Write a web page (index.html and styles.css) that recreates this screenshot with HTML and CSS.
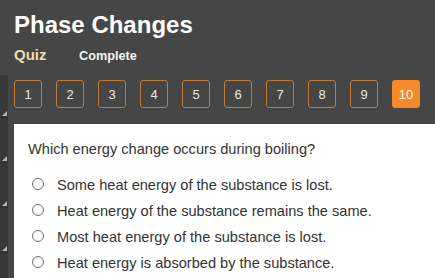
FILE: index.html
```html
<!DOCTYPE html>
<html>
<head>
<meta charset="utf-8">
<link rel="stylesheet" href="styles.css">
</head>
<body>
<header class="head">
  <h1 class="title">Phase Changes</h1>
  <div class="sub">
    <span class="kind">Quiz</span>
    <span class="status">Complete</span>
  </div>
</header>
<div class="main">
  <div class="rail">
    <div class="seg seg-first"><i class="grip"></i></div>
    <div class="seg"><i class="grip"></i></div>
    <div class="seg"><i class="grip"></i></div>
    <div class="seg"><i class="grip"></i></div>
    <div class="seg seg-last"></div>
  </div>
  <div class="content">
    <nav class="pager">
      <span class="pg">1</span>
      <span class="pg">2</span>
      <span class="pg">3</span>
      <span class="pg">4</span>
      <span class="pg">5</span>
      <span class="pg">6</span>
      <span class="pg">7</span>
      <span class="pg">8</span>
      <span class="pg">9</span>
      <span class="pg pg-active">10</span>
    </nav>
    <section class="panel">
      <p class="question">Which energy change occurs during boiling?</p>
      <ul class="options">
        <li class="opt"><span class="radio"></span>Some heat energy of the substance is lost.</li>
        <li class="opt"><span class="radio"></span>Heat energy of the substance remains the same.</li>
        <li class="opt"><span class="radio"></span>Most heat energy of the substance is lost.</li>
        <li class="opt"><span class="radio"></span>Heat energy is absorbed by the substance.</li>
      </ul>
    </section>
  </div>
</div>
</body>
</html>
```
FILE: styles.css
```css
html, body {
  margin: 0;
  padding: 0;
  height: 100%;
  overflow: hidden;
}
body {
  background: #464646;
  font-family: "Liberation Sans", Arial, sans-serif;
  display: flex;
  flex-direction: column;
}
.head {
  padding: 11px 14px 0 14px;
}
.title {
  margin: 0;
  font-size: 24px;
  line-height: 28px;
  font-weight: bold;
  color: #ffffff;
}
.sub {
  margin-top: 6px;
  display: flex;
  align-items: baseline;
  line-height: 20px;
}
.kind {
  font-size: 15px;
  font-weight: bold;
  color: #f2dca6;
  width: 65px;
}
.status {
  font-size: 12.7px;
  font-weight: bold;
  color: #f4f4f4;
}
.main {
  flex: 1;
  display: flex;
  margin-top: 9px;
  min-height: 0;
}
.rail {
  width: 8px;
  display: flex;
  flex-direction: column;
  background: #383838;
}
.seg {
  height: 45px;
  border-bottom: 1px solid #2c2c2c;
  box-sizing: border-box;
  display: flex;
  align-items: flex-end;
  justify-content: flex-end;
  padding: 0 1px 1px 0;
}
.seg-first {
  height: 43px;
}
.seg-last {
  flex: 1;
  border-bottom: none;
}
.grip {
  display: block;
  width: 5px;
  height: 5px;
  background: #b4b4b4;
  clip-path: polygon(100% 0, 100% 100%, 0 100%);
}
.content {
  flex: 1;
  margin-left: 6px;
  display: flex;
  flex-direction: column;
}
.pager {
  display: flex;
  gap: 14px;
  padding: 5px 0 16px 0;
}
.pg {
  width: 28px;
  height: 28px;
  box-sizing: border-box;
  border: 1px solid #c27a34;
  border-radius: 3px;
  display: flex;
  align-items: center;
  justify-content: center;
  font-size: 13px;
  color: #e6e6e6;
}
.pg-active {
  background: #f68a26;
  border-color: #f68a26;
  color: #ffffff;
}
.panel {
  flex: 1;
  background: #ffffff;
  padding: 16px 0 0 14px;
  color: #333333;
  font-size: 14.6px;
}
.question {
  margin: 0 0 14px 0;
  line-height: 18px;
}
.options {
  list-style: none;
  margin: 0;
  padding: 0;
}
.opt {
  display: flex;
  align-items: center;
  height: 26px;
  line-height: 26px;
}
.radio {
  width: 12px;
  height: 12px;
  box-sizing: border-box;
  border: 1px solid #6e6e6e;
  border-radius: 50%;
  margin: 0 13px 0 4px;
  background: #fff;
  flex: none;
  position: relative;
  top: -1px;
}
```
